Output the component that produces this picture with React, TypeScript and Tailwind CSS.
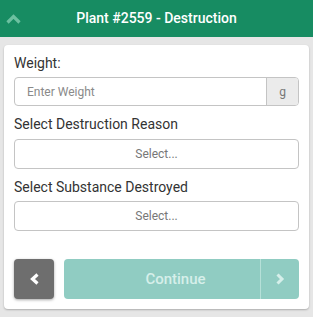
import React from "react";

const ChevronUp = () => (
  <svg width="15" height="10" viewBox="0 0 15 10" className="block">
    <path d="M1.5 8.5 L7.5 2.5 L13.5 8.5" fill="none" stroke="currentColor" strokeWidth="3.2" strokeLinejoin="miter" />
  </svg>
);

const ChevronLeft = () => (
  <svg width="11" height="12" viewBox="0 0 11 12" className="block">
    <path d="M8.5 1.5 L3.5 6 L8.5 10.5" fill="none" stroke="currentColor" strokeWidth="3.2" />
  </svg>
);

const ChevronRight = () => (
  <svg width="10" height="12" viewBox="0 0 10 12" className="block">
    <path d="M2.5 1.5 L7 6 L2.5 10.5" fill="none" stroke="currentColor" strokeWidth="3" />
  </svg>
);

const Label = ({ children }: { children: React.ReactNode }) => (
  <div className="text-[14px] leading-[20px] text-[#333]">{children}</div>
);

const SelectBox = () => (
  <div className="h-[30px] border border-[#c4c4c4] rounded-[4px] flex items-center justify-center text-[12px] text-[#777]">
    Select...
  </div>
);

export default function App() {
  return (
    <div className="w-[313px] h-[317px] bg-[#e6e6e6] font-['Roboto',sans-serif] overflow-hidden">
      <div className="h-[37px] bg-[#178c62] relative flex items-center justify-center">
        <span className="absolute left-[6px] top-[14px] text-[#6cc0a0]">
          <ChevronUp />
        </span>
        <span className="text-white text-[14px] font-medium">Plant #2559 - Destruction</span>
      </div>

      <div className="mx-[4px] mt-[8px] bg-white rounded-[4px] shadow-[0_1px_2px_rgba(0,0,0,0.25)] px-[10px] pt-[8px] pb-[10px] w-[305px]">
        <Label>Weight:</Label>
        <div className="mt-[4px] h-[29px] flex border border-[#c4c4c4] rounded-[4px] overflow-hidden">
          <div className="flex-1 flex items-center pl-[12px] text-[12px] text-[#8a8a8a]">Enter Weight</div>
          <div className="w-[32px] bg-[#ebebeb] border-l border-[#c4c4c4] flex items-center justify-center text-[12px] text-[#777]">
            g
          </div>
        </div>

        <div className="mt-[8px]">
          <Label>Select Destruction Reason</Label>
        </div>
        <div className="mt-[5px]">
          <SelectBox />
        </div>

        <div className="mt-[8px]">
          <Label>Select Substance Destroyed</Label>
        </div>
        <div className="mt-[4px]">
          <SelectBox />
        </div>

        <div className="mt-[28px] flex gap-[10px]">
          <div className="w-[40px] h-[40px] rounded-[4px] bg-[#6e6e6e] shadow-[0_1px_3px_rgba(0,0,0,0.35)] flex items-center justify-center text-white">
            <ChevronLeft />
          </div>
          <div className="flex-1 h-[40px] rounded-[4px] bg-[#90ccc2] flex">
            <div className="flex-1 flex items-center justify-center pl-[27px] text-[15px] font-medium text-[#d6efea]">
              Continue
            </div>
            <div className="w-[39px] border-l border-[#b6e0d8] flex items-center justify-center text-[#d6efea]">
              <ChevronRight />
            </div>
          </div>
        </div>
      </div>
    </div>
  );
}
